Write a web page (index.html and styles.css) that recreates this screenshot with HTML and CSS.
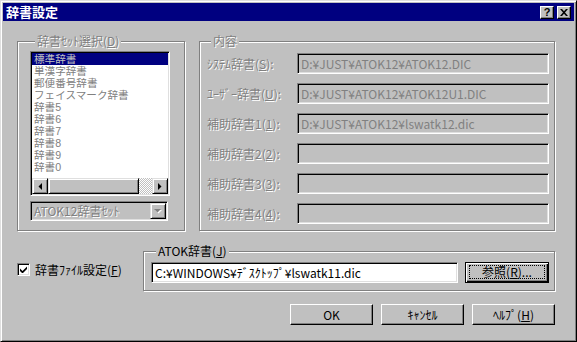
FILE: index.html
```html
<!DOCTYPE html>
<html lang="ja">
<head>
<meta charset="utf-8">
<title>辞書設定</title>
<link rel="stylesheet" href="styles.css">
</head>
<body>
<div class="window">
  <div class="titlebar">
    <span class="title">辞書設定</span>
    <div class="tbtns">
      <span class="tbtn help">?</span>
      <span class="tbtn close"><svg width="8" height="7" viewBox="0 0 8 7"><path d="M0 0h2l2 2.2L6 0h2L5 3.5 8 7H6L4 4.8 2 7H0l3-3.5z" fill="#000"/></svg></span>
    </div>
  </div>
  <div class="client">
    <div class="toprow">
      <div class="group gleft">
        <span class="legend dis">辞書ｾｯﾄ選択(<u>D</u>)</span>
        <div class="listbox">
          <ul class="items">
            <li class="sel">標準辞書</li>
            <li>単漢字辞書</li>
            <li>郵便番号辞書</li>
            <li>フェイスマーク辞書</li>
            <li>辞書5</li>
            <li>辞書6</li>
            <li>辞書7</li>
            <li>辞書8</li>
            <li>辞書9</li>
            <li>辞書0</li>
          </ul>
          <div class="hscroll">
            <span class="sbtn"><svg width="4" height="7" viewBox="0 0 4 7"><path d="M4 0v7L0.5 3.5z" fill="#000"/></svg></span>
            <span class="thumb"></span>
            <span class="track"></span>
            <span class="sbtn"><svg width="4" height="7" viewBox="0 0 4 7"><path d="M0 0v7l3.5-3.5z" fill="#000"/></svg></span>
          </div>
        </div>
        <div class="combo">
          <span class="ctext dis">ATOK12辞書ｾｯﾄ</span>
          <span class="cbtn"><svg width="8" height="5" viewBox="0 0 8 5"><path d="M1 1h7L4.5 4.5z" fill="#fff"/><path d="M0 0h7L3.5 3.5z" fill="#808080"/></svg></span>
        </div>
      </div>
      <div class="group gright">
        <span class="legend dis">内容</span>
        <div class="rows">
          <div class="row"><span class="lbl dis">ｼｽﾃﾑ辞書(<u>S</u>):</span><span class="field off">D:¥JUST¥ATOK12¥ATOK12.DIC</span></div>
          <div class="row"><span class="lbl dis">ﾕｰｻﾞｰ辞書(<u>U</u>):</span><span class="field off">D:¥JUST¥ATOK12¥ATOK12U1.DIC</span></div>
          <div class="row"><span class="lbl dis">補助辞書1(<u>1</u>):</span><span class="field off">D:¥JUST¥ATOK12¥lswatk12.dic</span></div>
          <div class="row"><span class="lbl dis">補助辞書2(<u>2</u>):</span><span class="field off"></span></div>
          <div class="row"><span class="lbl dis">補助辞書3(<u>3</u>):</span><span class="field off"></span></div>
          <div class="row"><span class="lbl dis">補助辞書4(<u>4</u>):</span><span class="field off"></span></div>
        </div>
      </div>
    </div>
    <div class="midrow">
      <div class="check">
        <span class="cbox"><svg width="7" height="7" viewBox="0 0 7 7"><path d="M0 2.5l2.5 2.5L7 0.5V3L2.5 7.5 0 5z" fill="#000"/></svg></span>
        <span class="clabel">辞書ﾌｧｲﾙ設定(<u>F</u>)</span>
      </div>
      <div class="group gatok">
        <span class="legend">ATOK辞書(<u>J</u>)</span>
        <div class="atokrow">
          <span class="field edit">C:¥WINDOWS¥ﾃﾞｽｸﾄｯﾌﾟ¥lswatk11.dic</span>
          <span class="btn default"><span class="focus">参照(<u>R</u>)...</span></span>
        </div>
      </div>
    </div>
    <div class="btnrow">
      <span class="btn">OK</span>
      <span class="btn">ｷｬﾝｾﾙ</span>
      <span class="btn">ﾍﾙﾌﾟ(<u>H</u>)</span>
    </div>
  </div>
</div>
</body>
</html>
```

FILE: styles.css
```css
* { box-sizing: border-box; }
html, body { margin: 0; padding: 0; }
body {
  width: 577px;
  height: 342px;
  overflow: hidden;
  background: #c0c0c0;
  font-family: "Noto Sans CJK JP", sans-serif;
  font-size: 12px;
  line-height: 12px;
  color: #000;
}
u { text-decoration: underline; text-underline-offset: 1px; }

.window {
  width: 577px;
  height: 342px;
  background: #c0c0c0;
  border: 1px solid;
  border-color: #dfdfdf #000 #000 #dfdfdf;
  box-shadow: inset 1px 1px #fff, inset -1px -1px #808080;
  padding: 2px;
  display: flex;
  flex-direction: column;
}

.titlebar {
  height: 18px;
  flex: none;
  background: #000080;
  display: flex;
  align-items: center;
  justify-content: space-between;
  padding: 0 3px 0 3px;
}
.title { color: #fff; font-weight: bold; font-size: 13px; line-height: 14px; }
.tbtns { display: flex; gap: 3px; }
.tbtn {
  width: 14px;
  height: 13px;
  background: #c0c0c0;
  border: 1px solid;
  border-color: #fff #000 #000 #fff;
  box-shadow: inset -1px -1px #808080;
  display: flex;
  align-items: center;
  justify-content: center;
}
.help { font-weight: bold; font-family: "Liberation Sans", sans-serif; font-size: 11px; }

.client {
  flex: 1;
  display: flex;
  flex-direction: column;
  padding: 0 19px 0 14px;
}

.dis { color: #808080; text-shadow: 1px 1px 0 #fff; }

.group {
  border: 1px solid #808080;
  box-shadow: inset 1px 1px #fff, 1px 1px #fff;
  display: flex;
  flex-direction: column;
}
.legend {
  align-self: flex-start;
  margin: -7px 0 0 5px;
  padding: 0 2px;
  height: 12px;
  background: #c0c0c0;
  white-space: nowrap;
}

.toprow {
  margin-top: 20px;
  display: flex;
  gap: 14px;
}
.gleft { width: 168px; flex: none; padding: 0 0 0 12px; }
.gright { flex: 1; padding: 0 5px 6px 6px; }

.listbox {
  margin-top: 4px;
  width: 140px;
  height: 145px;
  background: #fff;
  border: 1px solid;
  border-color: #808080 #fff #fff #808080;
  box-shadow: inset 1px 1px #000, inset -1px -1px #dfdfdf;
  padding: 1px;
  display: flex;
  flex-direction: column;
}
.items {
  list-style: none;
  margin: 0;
  padding: 0;
  flex: 1;
  color: #808080;
  font-family: "Liberation Sans", "Noto Sans CJK JP", sans-serif;
  font-size: 10.6px;
}
.items li { height: 12px; line-height: 12px; padding-left: 2px; white-space: nowrap; }
.items li.sel { background: #000080; color: #c0c0c0; }

.hscroll { height: 16px; display: flex; flex: none; }
.sbtn, .thumb, .cbtn {
  background: #c0c0c0;
  border: 1px solid;
  border-color: #dfdfdf #000 #000 #dfdfdf;
  box-shadow: inset 1px 1px #fff, inset -1px -1px #808080;
}
.sbtn { width: 16px; display: flex; align-items: center; justify-content: center; }
.thumb { width: 91px; }
.track {
  flex: 1;
  background-color: #c0c0c0;
  background-image: repeating-conic-gradient(#fff 0 25%, #c0c0c0 0 50%);
  background-size: 2px 2px;
}

.combo {
  margin-top: 5px;
  width: 138px;
  height: 20px;
  border: 1px solid;
  border-color: #808080 #fff #fff #808080;
  box-shadow: inset 1px 1px #000, inset -1px -1px #dfdfdf;
  padding: 1px;
  display: flex;
  align-items: center;
  background: #c0c0c0;
}
.ctext { flex: 1; padding-left: 2px; white-space: nowrap; }
.cbtn { width: 16px; height: 16px; display: flex; align-items: center; justify-content: center; }

.rows { margin-top: 6px; display: flex; flex-direction: column; gap: 9px; }
.row { display: flex; align-items: center; height: 21px; }
.lbl { width: 91px; flex: none; white-space: nowrap; padding-left: 1px; }

.field {
  height: 21px;
  flex: 1;
  border: 1px solid;
  border-color: #808080 #fff #fff #808080;
  box-shadow: inset 1px 1px #000, inset -1px -1px #dfdfdf;
  padding: 0 3px;
  display: flex;
  align-items: center;
  white-space: nowrap;
  overflow: hidden;
}
.field.off { background: #c0c0c0; color: #808080; }
.field.edit { background: #fff; color: #000; }

.midrow { margin-top: 20px; display: flex; }
.check { width: 126px; flex: none; display: flex; align-items: center; gap: 5px; margin-top: 12px; align-self: flex-start; }
.cbox {
  width: 13px;
  height: 13px;
  background: #fff;
  border: 1px solid;
  border-color: #808080 #fff #fff #808080;
  box-shadow: inset 1px 1px #000, inset -1px -1px #dfdfdf;
  display: flex;
  align-items: center;
  justify-content: center;
}
.clabel { white-space: nowrap; }
.gatok { flex: 1; padding: 0 5px 7px 7px; }
.gatok .legend { margin-left: 5px; }
.atokrow { margin-top: 5px; display: flex; gap: 7px; height: 21px; }

.btn {
  width: 83px;
  height: 21px;
  flex: none;
  background: #c0c0c0;
  border: 1px solid;
  border-color: #fff #000 #000 #fff;
  box-shadow: inset -1px -1px #808080;
  display: flex;
  align-items: center;
  justify-content: center;
  white-space: nowrap;
}
.btn.default {
  width: 84px;
  border-color: #000;
  box-shadow: inset 1px 1px #fff, inset -1px -1px #000, inset -2px -2px #808080;
  padding: 2px 3px 3px 3px;
}
.focus {
  flex: 1;
  align-self: stretch;
  border: 1px dotted #000;
  display: flex;
  align-items: center;
  justify-content: center;
}

.btnrow { margin-top: 13px; display: flex; justify-content: flex-end; gap: 8px; }
```
